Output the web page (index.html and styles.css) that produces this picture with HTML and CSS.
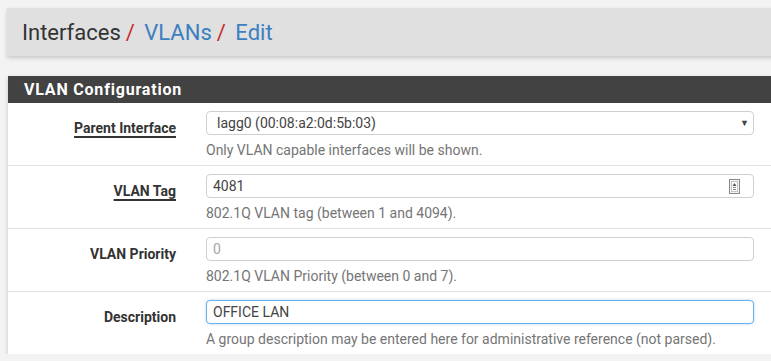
FILE: index.html
```html
<!DOCTYPE html>
<html lang="en">
<head>
    <meta charset="UTF-8">
    <meta name="viewport" content="width=device-width, initial-scale=1.0">
    <title>Interfaces / VLANs / Edit</title>
    <link rel="stylesheet" href="styles.css">
</head>
<body>

    <div class="page">
        <div class="breadcrumb">
            <span class="crumb">Interfaces</span><span class="sep">/</span>
            <a class="crumb link" href="#">VLANs</a><span class="sep">/</span>
            <a class="crumb link" href="#">Edit</a>
        </div>

        <div class="panel">
            <div class="panel-heading">VLAN Configuration</div>
            <div class="panel-body">

                <div class="form-row">
                    <label class="form-label required">Parent Interface</label>
                    <div class="form-field">
                        <div class="form-control select">
                            <span>lagg0 (00:08:a2:0d:5b:03)</span>
                            <span class="caret">&#9660;</span>
                        </div>
                        <div class="help">Only VLAN capable interfaces will be shown.</div>
                    </div>
                </div>

                <div class="form-row">
                    <label class="form-label required">VLAN Tag</label>
                    <div class="form-field">
                        <div class="input-wrap">
                            <input class="form-control" type="text" value="4081">
                            <svg class="spin" width="11" height="15" viewBox="0 0 11 15">
                                <rect x="0.5" y="0.5" width="10" height="14" fill="#f2f2f2" stroke="#8a8a8a"/>
                                <rect x="2.5" y="2.5" width="6" height="10" fill="#fff" stroke="#c4c4c4"/>
                                <path d="M5.5 4 L7.5 7 L3.5 7 Z" fill="#555"/>
                                <path d="M4 8.5 H7 M4 10.5 H7" stroke="#888"/>
                            </svg>
                        </div>
                        <div class="help">802.1Q VLAN tag (between 1 and 4094).</div>
                    </div>
                </div>

                <div class="form-row">
                    <label class="form-label">VLAN Priority</label>
                    <div class="form-field">
                        <input class="form-control" type="text" placeholder="0">
                        <div class="help">802.1Q VLAN Priority (between 0 and 7).</div>
                    </div>
                </div>

                <div class="form-row">
                    <label class="form-label">Description</label>
                    <div class="form-field">
                        <input class="form-control focus" type="text" value="OFFICE LAN">
                        <div class="help">A group description may be entered here for administrative reference (not parsed).</div>
                    </div>
                </div>

            </div>
        </div>
    </div>

</body>
</html>
```

FILE: styles.css
```css
html, body {
    margin: 0;
    overflow: hidden;
}
body {
    font-family: Roboto, "Liberation Sans", sans-serif;
    font-size: 14px;
    color: #333;
    background-color: #f3f3f3;
}
.page {
    width: 800px;
    padding: 8px 0 0 8px;
}
.breadcrumb {
    height: 48px;
    line-height: 50px;
    margin-left: -1px;
    padding-left: 15px;
    background-color: #e0e0e0;
    box-shadow: 0px 2px 4px rgba(0, 0, 0, 0.18);
    font-size: 22px;
}
.crumb {
    color: #333;
    text-decoration: none;
}
.crumb.link {
    color: #3b7fc0;
}
.sep {
    color: #c42d2d;
    margin: 0 4px 0 5px;
}
.panel {
    margin-top: 20px;
    background-color: #fff;
    box-shadow: 0px 2px 5px rgba(0, 0, 0, 0.18);
}
.panel-heading {
    height: 27px;
    line-height: 28px;
    padding-left: 16px;
    background-color: #424242;
    color: #fff;
    font-size: 16px;
    font-weight: bold;
    letter-spacing: 0.8px;
}
.form-row {
    display: grid;
    grid-template-columns: 168px 548px;
    column-gap: 30px;
    padding: 8px 0 5px;
    border-top: 1px solid #e2e2e2;
}
.form-row:first-child {
    border-top: none;
}
.form-label {
    padding-top: 7px;
    text-align: right;
    font-weight: bold;
    line-height: 20px;
}
.form-label.required {
    text-decoration: underline;
    text-decoration-thickness: 1.5px;
    text-underline-offset: 3px;
}
.form-control {
    box-sizing: border-box;
    display: block;
    width: 100%;
    height: 24px;
    margin: 0;
    padding: 0 6px;
    border: 1px solid #cfcfcf;
    border-radius: 4px;
    font-family: inherit;
    font-size: 14px;
    color: #444;
    background-color: #fff;
    outline: none;
}
.form-control::placeholder {
    color: #a6a6a6;
}
.form-control.focus {
    border-color: #66afe9;
    box-shadow: 0 0 3px rgba(102, 175, 233, 0.5);
}
.select {
    display: flex;
    align-items: center;
    justify-content: space-between;
    padding: 0 4px 0 10px;
}
.caret {
    font-size: 9px;
    color: #444;
}
.input-wrap {
    position: relative;
}
.spin {
    position: absolute;
    right: 14px;
    top: 5px;
}
.help {
    margin-top: 5px;
    line-height: 20px;
    color: #757575;
}
```
